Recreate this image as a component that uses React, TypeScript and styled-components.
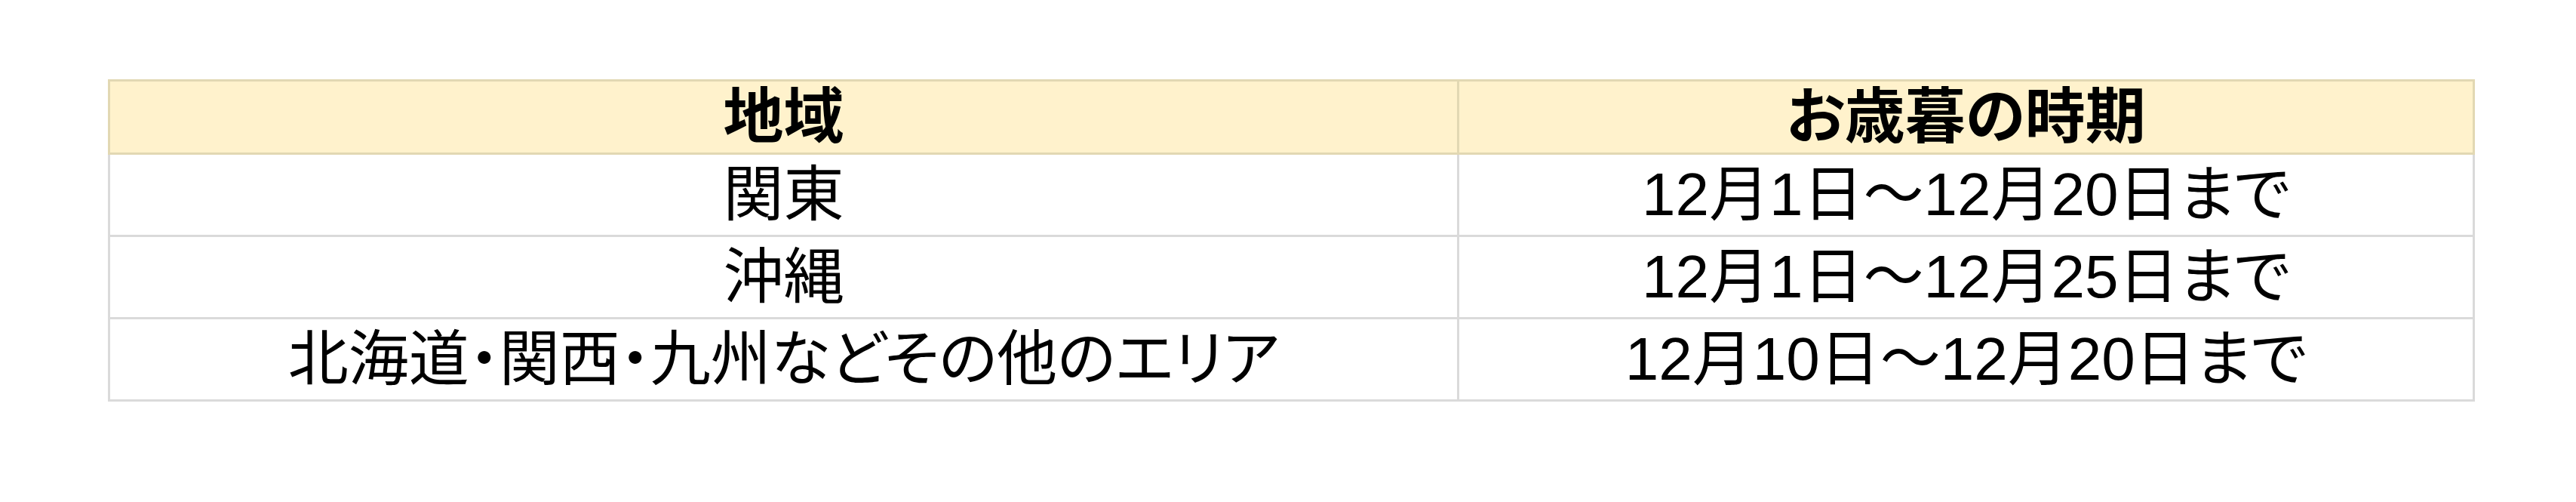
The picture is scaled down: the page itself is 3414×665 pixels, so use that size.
import React from 'react';
import styled, { createGlobalStyle, css } from 'styled-components';

const GlobalStyle = createGlobalStyle`
  html, body {
    margin: 0;
    padding: 0;
    background: #ffffff;
  }
  body {
    font-family: "Liberation Sans", "Noto Sans CJK JP", sans-serif;
  }
`;

const Page = styled.div`
  padding: 105px 0 0 143px;
`;

const Table = styled.div`
  display: grid;
  grid-template-columns: 1791px 1346px;
  width: 3137px;
`;

const Cell = styled.div<{ head?: boolean; first?: boolean }>`
  display: flex;
  align-items: center;
  justify-content: center;
  box-sizing: border-box;
  height: 109px;
  border-right: 3px solid #dadada;
  border-bottom: 3px solid #dadada;
  font-family: "Liberation Sans", "Noto Sans CJK JP", sans-serif;
  font-feature-settings: "palt";
  font-size: 80px;
  line-height: 1;
  color: #000000;
  white-space: nowrap;

  ${({ first }) =>
    first &&
    css`
      border-left: 3px solid #dadada;
    `}

  ${({ head }) =>
    head &&
    css`
      height: 100px;
      background-color: #fff2cc;
      border-top: 3px solid #e2d8b3;
      border-right-color: #e2d8b3;
      border-bottom-color: #e2d8b3;
      border-left-color: #e2d8b3;
      font-weight: 700;
    `}
`;

const ROWS = [
  { area: '関東', period: '12月1日～12月20日まで' },
  { area: '沖縄', period: '12月1日～12月25日まで' },
  { area: '北海道・関西・九州などその他のエリア', period: '12月10日～12月20日まで' },
];

const App = () => {
  return (
    <>
      <GlobalStyle />
      <Page>
        <Table>
          <Cell head first>
            地域
          </Cell>
          <Cell head>お歳暮の時期</Cell>
          {ROWS.map((row) => (
            <React.Fragment key={row.area}>
              <Cell first>{row.area}</Cell>
              <Cell>{row.period}</Cell>
            </React.Fragment>
          ))}
        </Table>
      </Page>
    </>
  );
};

export default App;
